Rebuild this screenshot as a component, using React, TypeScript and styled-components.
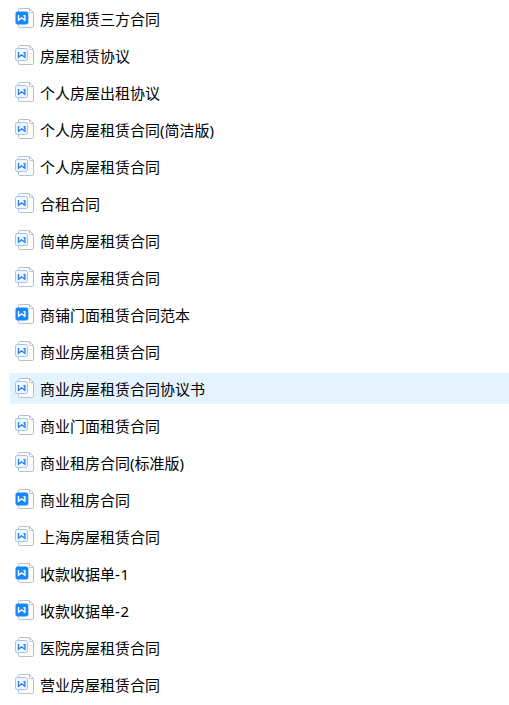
import React from "react";
import styled, { createGlobalStyle } from "styled-components";

const GlobalStyle = createGlobalStyle`
  body {
    margin: 0;
    background: #ffffff;
  }
`;

const FileList = styled.ul`
  box-sizing: border-box;
  height: 705px;
  margin: 0;
  padding: 3px 0 0 10px;
  list-style: none;
  display: flex;
  flex-direction: column;
  gap: 6px;
  overflow: hidden;
  font-family: "Noto Sans", "Noto Sans CJK SC", sans-serif;
`;

const FileRow = styled.li<{ $selected: boolean }>`
  box-sizing: border-box;
  flex: none;
  height: 31px;
  padding-left: 5px;
  display: flex;
  align-items: center;
  gap: 5px;
  background: ${(p) => (p.$selected ? "#e5f3ff" : "transparent")};
`;

const FileName = styled.span`
  font-size: 15px;
  line-height: 20px;
  font-weight: 400;
  color: #000000;
  white-space: nowrap;
`;

const Suffix = styled.span`
  letter-spacing: 0.6px;
`;

const IconSvg = styled.svg`
  flex: none;
  display: block;
  margin-bottom: 1px;
`;

function DocIcon({ filled }: { filled: boolean }) {
  return (
    <IconSvg width="20" height="20" viewBox="0 0 20 20" fill="none">
      <path
        d="M4.8 .5H14.5L18.5 4.5V18.1Q18.5 19.5 17.1 19.5H4.9Q3.5 19.5 3.5 18.1V1.8Q3.5 .5 4.8 .5Z"
        fill="#fdfdfe"
        stroke="#b8c0cb"
      />
      <path d="M14.5 .8V3.5Q14.5 4.5 15.5 4.5H18.2" stroke="#b8c0cb" />
      <rect
        x={filled ? 0.7 : 0.5}
        y={filled ? 3.7 : 3.5}
        width={filled ? 12.4 : 12}
        height={filled ? 12.6 : 12}
        rx="1.8"
        fill={filled ? "#1688fa" : "#f1f7ff"}
        stroke={filled ? "#1688fa" : "#9dc3f7"}
        strokeWidth={filled ? 0.4 : 1}
      />
      <path
        d="M3.5 7V12.2L6.7 9.9L9.9 12.2V7.6H8.4"
        stroke={filled ? "#ffffff" : "#247ff0"}
        strokeWidth="1.35"
      />
    </IconSvg>
  );
}

type FileItem = {
  name: string;
  suffix?: string;
  filled?: boolean;
  selected?: boolean;
};

const files: FileItem[] = [
  { name: "房屋租赁三方合同", filled: true },
  { name: "房屋租赁协议" },
  { name: "个人房屋出租协议" },
  { name: "个人房屋租赁合同(简洁版)" },
  { name: "个人房屋租赁合同" },
  { name: "合租合同" },
  { name: "简单房屋租赁合同" },
  { name: "南京房屋租赁合同" },
  { name: "商铺门面租赁合同范本", filled: true },
  { name: "商业房屋租赁合同" },
  { name: "商业房屋租赁合同协议书", selected: true },
  { name: "商业门面租赁合同" },
  { name: "商业租房合同(标准版)" },
  { name: "商业租房合同", filled: true },
  { name: "上海房屋租赁合同" },
  { name: "收款收据单", suffix: "-1", filled: true },
  { name: "收款收据单", suffix: "-2", filled: true },
  { name: "医院房屋租赁合同" },
  { name: "营业房屋租赁合同" },
];

export default function App() {
  return (
    <>
      <GlobalStyle />
      <FileList>
        {files.map((file) => (
          <FileRow
            key={file.name + (file.suffix ?? "")}
            $selected={!!file.selected}
          >
            <DocIcon filled={!!file.filled} />
            <FileName>
              {file.name}
              {file.suffix && <Suffix>{file.suffix}</Suffix>}
            </FileName>
          </FileRow>
        ))}
      </FileList>
    </>
  );
}
